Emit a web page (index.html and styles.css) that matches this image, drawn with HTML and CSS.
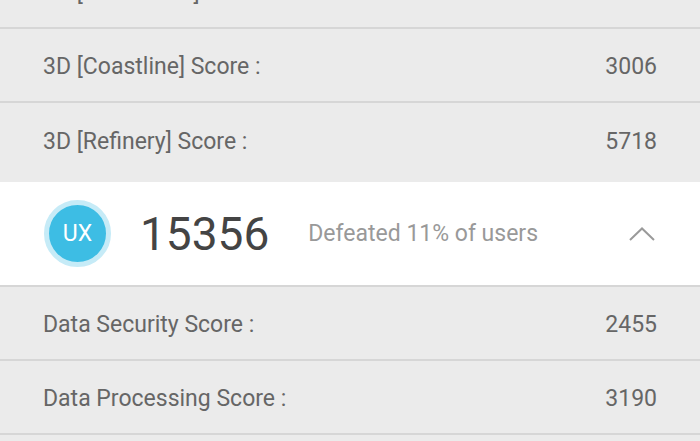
FILE: index.html
```html
<!DOCTYPE html>
<html>
<head>
    <title>Benchmark Scores</title>
    <link rel="stylesheet" href="styles.css">
</head>
<body>
    <div class="score-list">
        <div class="score-group">
            <div class="score-row">
                <span class="score-label">3D [Manhattan] Score :</span>
                <span class="score-value">4827</span>
            </div>
            <div class="score-row">
                <span class="score-label">3D [Coastline] Score :</span>
                <span class="score-value">3006</span>
            </div>
            <div class="score-row">
                <span class="score-label">3D [Refinery] Score :</span>
                <span class="score-value">5718</span>
            </div>
        </div>

        <!-- UX category summary -->
        <div class="category">
            <div class="category-badge">
                <span class="badge-text">UX</span>
            </div>
            <span class="category-score">15356</span>
            <span class="category-rank">Defeated 11% of users</span>
            <svg class="collapse-icon" viewBox="0 0 26 14" xmlns="http://www.w3.org/2000/svg">
                <path d="M1 13 L13 1.5 L25 13" />
            </svg>
        </div>

        <div class="score-group">
            <div class="score-row">
                <span class="score-label">Data Security Score :</span>
                <span class="score-value">2455</span>
            </div>
            <div class="score-row">
                <span class="score-label">Data Processing Score :</span>
                <span class="score-value">3190</span>
            </div>
            <div class="score-row">
                <span class="score-label">Image Processing Score :</span>
                <span class="score-value">4652</span>
            </div>
        </div>
    </div>
</body>
</html>
```

FILE: styles.css
```css
body {
    background: #ebebeb;
    margin: 0;
    padding: 0;
    font-family: Roboto, 'Noto Sans', Arial, sans-serif;
    overflow: hidden;
}
.score-list {
    margin-top: -45px;
}
.score-row {
    display: flex;
    align-items: center;
    justify-content: space-between;
    height: 69px;
    padding: 3px 43px 0 43px;
    border-bottom: 2px solid #d6d6d6;
}
.score-group:first-child .score-row:last-child {
    border-bottom: none;
    height: 71px;
    margin-bottom: 5px;
}
.score-label, .score-value {
    color: #666;
    font-size: 23px;
}
/* UX summary row */
.category {
    display: flex;
    align-items: center;
    background: #fff;
    height: 103px;
    padding: 0 44px;
    border-bottom: 2px solid #d6d6d6;
}
.category-badge {
    width: 57px;
    height: 57px;
    border-radius: 50%;
    background: #3dbde4;
    border: 5px solid #c6ebf7;
    display: flex;
    align-items: center;
    justify-content: center;
    flex-shrink: 0;
}
.badge-text {
    color: #fff;
    font-size: 23px;
}
.category-score {
    color: #444;
    font-size: 46px;
    margin-left: 29px;
}
.category-rank {
    color: #999;
    font-size: 23px;
    margin-left: 39px;
    flex: 1;
}
.collapse-icon {
    width: 26px;
    height: 14px;
    margin-right: 1px;
    fill: none;
    stroke: #9a9a9a;
    stroke-width: 2;
}
```
